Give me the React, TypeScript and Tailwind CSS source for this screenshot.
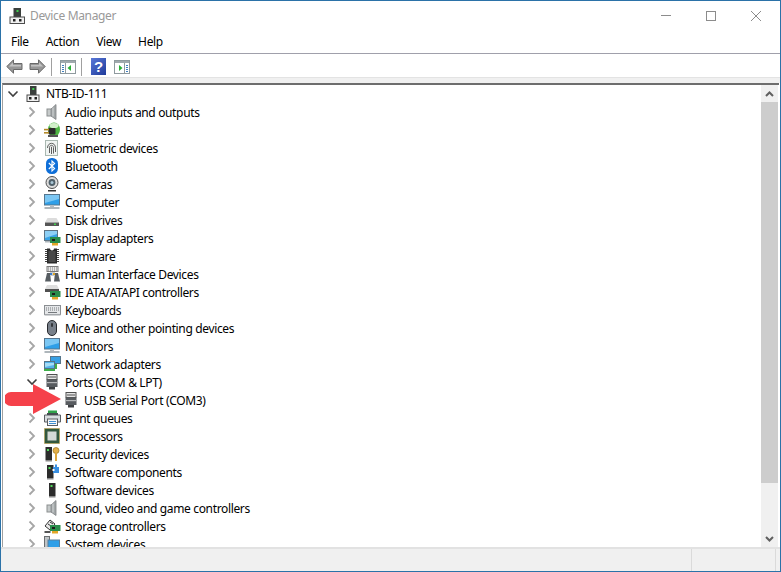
import type { ReactNode } from "react";

function Ico({ children, w = 16, h = 16 }: { children: ReactNode; w?: number; h?: number }) {
  return (
    <svg width={w} height={h} viewBox={`0 0 ${w} ${h}`} className="shrink-0">
      {children}
    </svg>
  );
}

const Computer = () => (
  <Ico>
    <rect x="4.5" y="0" width="7.5" height="10" fill="#3a3f3c" />
    <rect x="7.5" y="2" width="2" height="2" fill="#3fd04f" />
    <rect x="1" y="9" width="14.5" height="6.5" fill="#f1f1f1" stroke="#4c4c4c" />
    <rect x="4" y="11" width="2.5" height="2.5" fill="#222" />
    <rect x="10" y="11" width="2.5" height="2.5" fill="#222" />
  </Ico>
);

const RootComputer = () => (
  <Ico w={14}>
    <rect x="4" y="0" width="6.5" height="10" fill="#3a3f3c" />
    <rect x="6.3" y="2" width="2" height="2" fill="#3fd04f" />
    <rect x="1" y="9" width="12" height="6.5" fill="#f1f1f1" stroke="#4c4c4c" />
    <rect x="3" y="11" width="2.5" height="2.5" fill="#222" />
    <rect x="8.5" y="11" width="2.5" height="2.5" fill="#222" />
  </Ico>
);

const Speaker = () => (
  <Ico>
    <rect x="3" y="5" width="4.5" height="7" fill="#c6caca" stroke="#8b8f90" />
    <path d="M7 5 L12 0.5 V15.5 L7 12 Z" fill="#a2a7a8" stroke="#7e8284" strokeWidth="0.8" />
    <path d="M9 3.5 V12.5" stroke="#d4d7d8" />
  </Ico>
);

const Battery = () => (
  <Ico>
    <ellipse cx="10" cy="7.5" rx="6" ry="7" fill="#4fb544" />
    <ellipse cx="10" cy="3.5" rx="4.5" ry="2.6" fill="#d3f0cb" />
    <rect x="4.5" y="6" width="7" height="6.5" rx="1" fill="#2c2c2c" />
    <rect x="0" y="6.8" width="5" height="1.6" fill="#b48a2a" />
    <rect x="0" y="10" width="5" height="1.6" fill="#b48a2a" />
    <rect x="4" y="13" width="10" height="2" fill="#555" />
  </Ico>
);

const Fingerprint = () => (
  <Ico>
    <rect x="1.5" y="0.5" width="12" height="15" fill="#f0f4f2" stroke="#a9b8b1" />
    <g fill="none" stroke="#5f5f5f" strokeWidth="1">
      <path d="M3.5 8 C3.5 1.8 11.5 1.8 11.5 8 V12" />
      <path d="M5.5 13 V7.5 C5.5 4.6 9.5 4.6 9.5 7.5 V13.5" />
      <path d="M7.5 6.8 V14" />
    </g>
  </Ico>
);

const Bluetooth = () => (
  <Ico>
    <rect x="2" y="0" width="12" height="16" rx="5.5" fill="#0f6fd8" />
    <path d="M4.8 5 L10.6 10.6 L8 13 V3 L10.6 5.4 L4.8 11" fill="none" stroke="#fff" strokeWidth="1.1" />
  </Ico>
);

const Camera = () => (
  <Ico>
    <circle cx="8" cy="6.5" r="6" fill="#dcdcdc" stroke="#505050" />
    <circle cx="8" cy="6.5" r="3.4" fill="#4f606a" />
    <circle cx="8" cy="6.5" r="1.5" fill="#a9c6d6" />
    <rect x="4" y="14" width="8" height="1.5" fill="#333" />
  </Ico>
);

const Monitor = () => (
  <Ico>
    <rect x="0.5" y="0.5" width="15" height="10.5" fill="#2f9fe8" stroke="#55768f" />
    <path d="M1 1 H15 V5 L1 9 Z" fill="#7cc7f3" />
    <rect x="6" y="11" width="4" height="2" fill="#b6bcc0" />
    <rect x="0.5" y="13" width="15" height="2" fill="#aeb6bb" />
  </Ico>
);

const Disk = () => (
  <Ico>
    <path d="M3.5 6 H12.5 L15 10.5 H1 Z" fill="#dcdcdc" />
    <rect x="1" y="10.5" width="14" height="3.5" fill="#565656" />
    <rect x="10" y="11.5" width="2" height="1.5" fill="#44d04f" />
  </Ico>
);

const Display = () => (
  <Ico w={17}>
    <rect x="0.5" y="0.5" width="13" height="10" fill="#39a3e6" stroke="#5f7484" />
    <path d="M1 1 H13 V4 L1 8 Z" fill="#8ed0f5" />
    <rect x="1" y="11" width="8" height="1.5" fill="#aeb6bb" />
    <rect x="6" y="7" width="10.5" height="6" fill="#2a8d4b" />
    <rect x="8" y="9" width="3" height="2" fill="#1c1c1c" />
    <rect x="8" y="13" width="6" height="2.5" fill="#e2a628" />
  </Ico>
);

const Chip = () => (
  <Ico>
    <path d="M2 1 V15 M14 1 V15" stroke="#444" strokeWidth="2" strokeDasharray="1 1" />
    <path d="M3 0.5 H6 A2 2 0 0 0 10 0.5 H13 V15.5 H3 Z" fill="#2a2a2a" />
    <rect x="4.5" y="3" width="7" height="11" fill="#484848" />
  </Ico>
);

const Hid = () => (
  <Ico w={17}>
    <rect x="3" y="0.5" width="11" height="5" fill="#e8e8e8" stroke="#7b7b7b" />
    <path d="M4 2 H13 M4 4 H13" stroke="#7b7b7b" strokeDasharray="1 1" />
    <path d="M1 15.5 L3 7 H6 L7 15.5 Z" fill="#565c61" />
    <path d="M10 15.5 L11 7 H14 L16 15.5 Z" fill="#565c61" />
    <rect x="6" y="6" width="5" height="4" fill="#c7cbd0" />
    <rect x="6" y="7" width="2" height="2" fill="#3d7cc9" />
    <rect x="9" y="7" width="2" height="2" fill="#d9a52b" />
  </Ico>
);

const Ide = () => (
  <Ico w={17}>
    <path d="M3 1 H13 L15 5 H1 Z" fill="#dedede" />
    <rect x="1" y="5" width="14" height="3" fill="#505050" />
    <rect x="6" y="7" width="10.5" height="6" fill="#2a8d4b" />
    <rect x="8" y="9" width="3" height="2" fill="#1c1c1c" />
    <rect x="8" y="13" width="6" height="2.5" fill="#e2a628" />
  </Ico>
);

const Keyboard = () => (
  <Ico w={17}>
    <rect x="0.5" y="3.5" width="16" height="9" fill="#e4e6e8" stroke="#8a8e92" />
    <path d="M2 6 H15 M2 8 H15" stroke="#74787c" strokeDasharray="1 1" />
    <path d="M4 10.5 H13" stroke="#74787c" />
    <rect x="0.5" y="12" width="16" height="1.5" fill="#a3a7ab" />
  </Ico>
);

const Mouse = () => (
  <Ico>
    <rect x="3.5" y="0.5" width="9" height="15" rx="4.5" fill="#78808a" stroke="#26292d" />
    <rect x="7" y="3" width="2" height="4" rx="1" fill="#33363a" />
  </Ico>
);

const Network = () => (
  <Ico w={17}>
    <rect x="6.5" y="0.5" width="10" height="7" fill="#38a0e4" stroke="#567589" />
    <rect x="0.5" y="5.5" width="10" height="7" fill="#52b3ea" stroke="#567589" />
    <path d="M1 7 H10 V9 L1 11 Z" fill="#a4dcf7" />
    <rect x="0" y="13" width="11" height="2" fill="#3fae49" />
    <rect x="11" y="8" width="2" height="5" fill="#3fae49" />
  </Ico>
);

const Port = () => (
  <Ico>
    <rect x="3" y="0.5" width="10" height="5" fill="#e4e4e4" stroke="#505050" />
    <path d="M5 2 V4 M7 2 V4 M9 2 V4 M11 2 V4" stroke="#505050" />
    <rect x="2.5" y="5.5" width="11" height="7.5" fill="#585c60" />
    <rect x="3" y="8" width="10" height="1.2" fill="#b4b6b8" />
    <rect x="5" y="13" width="6" height="2.5" fill="#3e4144" />
  </Ico>
);

const Printer = () => (
  <Ico w={17}>
    <rect x="4" y="0.5" width="9" height="4" fill="#2fa24a" />
    <path d="M0.5 5 H16.5 V12 H0.5 Z" fill="#d9dde0" stroke="#5a5e62" />
    <rect x="3" y="3" width="11" height="2" fill="#474c51" />
    <rect x="3.5" y="9" width="10" height="6.5" fill="#f8f8f8" stroke="#5a5e62" />
    <path d="M5 11.5 H12 M5 13.5 H12" stroke="#3f8ed0" />
  </Ico>
);

const Processor = () => (
  <Ico>
    <rect x="0.5" y="0.5" width="15" height="15" fill="#2d5a3a" stroke="#c49a3c" strokeDasharray="1 1" />
    <rect x="1.5" y="1.5" width="13" height="13" fill="#34573f" />
    <rect x="3.5" y="3.5" width="9" height="9" fill="#d5d9d6" />
  </Ico>
);

const Tower = ({ x = 2 }: { x?: number }) => (
  <>
    <rect x={x} y="1" width="6.5" height="13" fill="#2c2c2c" />
    <rect x={x + 1.5} y="3" width="2" height="2" fill="#4fdc59" />
    <rect x={x} y="14" width="6.5" height="1.5" fill="#8a8a8a" />
  </>
);

const Security = () => (
  <Ico>
    <Tower x={1.5} />
    <circle cx="12" cy="4.5" r="3" fill="#e3b04a" stroke="#9a7420" strokeWidth="0.7" />
    <rect x="11" y="7" width="2" height="8" fill="#dca63c" />
  </Ico>
);

const SoftComp = () => (
  <Ico>
    <Tower x={3} />
    <rect x="9" y="3" width="6" height="6" fill="#3a8fe0" />
    <rect x="11" y="0.5" width="2" height="3" fill="#3a8fe0" />
    <rect x="8.5" y="5" width="2" height="2" fill="#fff" />
  </Ico>
);

const SoftDev = () => (
  <Ico>
    <Tower x={5} />
  </Ico>
);

const Storage = () => (
  <Ico w={17}>
    <path d="M1 8 L6 2 L11 6 L6 12 Z" fill="#e8e8e8" stroke="#333" />
    <path d="M4 6 L7 8 M6 4 L9 6" stroke="#333" />
    <rect x="6" y="7" width="10.5" height="6" fill="#2a8d4b" />
    <rect x="8" y="9" width="3" height="2" fill="#1c1c1c" />
    <rect x="8" y="13" width="6" height="2.5" fill="#e2a628" />
    <rect x="0.5" y="13" width="6" height="2" fill="#555" />
  </Ico>
);

const SystemDev = () => (
  <Ico>
    <rect x="0.5" y="0.5" width="5" height="14" fill="#bfc3c5" stroke="#6a6e70" />
    <rect x="4" y="4" width="11.5" height="9" fill="#2f9fe8" stroke="#5b7f9c" />
    <rect x="2" y="14" width="13" height="1.5" fill="#aeb6bb" />
  </Ico>
);

const Right = () => (
  <svg width="8" height="12" viewBox="0 0 8 12" className="shrink-0">
    <path d="M1.5 1.5 L6 6 L1.5 10.5" fill="none" stroke="#a6a6a6" strokeWidth="1.8" />
  </svg>
);

const Down = () => (
  <svg width="12" height="8" viewBox="0 0 12 8" className="shrink-0">
    <path d="M1.5 1.5 L6 6 L10.5 1.5" fill="none" stroke="#404040" strokeWidth="1.6" />
  </svg>
);

const Pane = ({ side }: { side: "left" | "right" }) => (
  <svg width="16" height="14" viewBox="0 0 16 14" className="shrink-0">
    <rect x="0.5" y="0.5" width="15" height="13" fill="#fff" stroke="#8f9a9e" />
    <rect x="1" y="1" width="14" height="2" fill="#a0a9ad" />
    <path d={side === "left" ? "M5.5 3 V13" : "M10.5 3 V13"} stroke="#8f9a9e" />
    {side === "left" ? (
      <>
        <path d="M2 5.5 H4 M2 7.5 H4 M2 9.5 H4 M2 11.5 H4" stroke="#3f7fc0" />
        <path d="M11 5 L7.5 8 L11 11 Z" fill="#28b035" />
      </>
    ) : (
      <>
        <path d="M12 5.5 H14 M12 7.5 H14 M12 9.5 H14 M12 11.5 H14" stroke="#3f7fc0" />
        <path d="M5 5 L8.5 8 L5 11 Z" fill="#28b035" />
      </>
    )}
  </svg>
);

const NavArrow = ({ flip }: { flip?: boolean }) => (
  <svg width="17" height="15" viewBox="0 0 17 15" className={flip ? "shrink-0 -scale-x-100" : "shrink-0"}>
    <path d="M0.8 7.5 L7.5 0.8 V4.5 H16 V10.5 H7.5 V14.2 Z" fill="#979797" stroke="#6a6a6a" />
    <path d="M3 7.5 L7 3.5 V6 H15 V7.5 Z" fill="#c4c4c4" />
  </svg>
);

const Help = () => (
  <div className="flex h-[17px] w-[15px] shrink-0 items-center justify-center bg-[linear-gradient(135deg,#5a78d8,#1e3a9a)] font-['Liberation_Sans',sans-serif] text-[15px] leading-none font-bold text-white">
    ?
  </div>
);

const rows = [
  ["Audio inputs and outputs", Speaker],
  ["Batteries", Battery],
  ["Biometric devices", Fingerprint],
  ["Bluetooth", Bluetooth],
  ["Cameras", Camera],
  ["Computer", Monitor],
  ["Disk drives", Disk],
  ["Display adapters", Display],
  ["Firmware", Chip],
  ["Human Interface Devices", Hid],
  ["IDE ATA/ATAPI controllers", Ide],
  ["Keyboards", Keyboard],
  ["Mice and other pointing devices", Mouse],
  ["Monitors", Monitor],
  ["Network adapters", Network],
] as const;

const rowsAfter = [
  ["Print queues", Printer],
  ["Processors", Processor],
  ["Security devices", Security],
  ["Software components", SoftComp],
  ["Software devices", SoftDev],
  ["Sound, video and game controllers", Speaker],
  ["Storage controllers", Storage],
  ["System devices", SystemDev],
] as const;

function Row({ label, Icon }: { label: string; Icon: () => ReactNode }) {
  return (
    <div className="flex h-[18px] items-center pl-[21px]">
      <div className="flex w-[20px] shrink-0 pl-[4px]">
        <Right />
      </div>
      <div className="flex w-[21px] shrink-0 items-center">
        <Icon />
      </div>
      <span className="whitespace-nowrap pt-[2px]">{label}</span>
    </div>
  );
}

export default function App() {
  return (
    <div className="flex h-[572px] w-[781px] flex-col overflow-hidden border border-[#2b72a8] bg-white font-['Noto_Sans',sans-serif] text-[12px] tracking-[-0.35px] text-black">
      {/* title bar */}
      <div className="flex h-[29px] shrink-0 items-center pl-2">
        <Computer />
        <span className="ml-[5px] text-[#999]">Device Manager</span>
        <div className="ml-auto flex items-center gap-[35px] pr-[19px]">
          <div className="h-px w-[10px] bg-[#8c8c8c]" />
          <div className="h-[10px] w-[10px] border border-[#8c8c8c]" />
          <svg width="10" height="10" viewBox="0 0 10 10">
            <path d="M0 0 L10 10 M10 0 L0 10" stroke="#8c8c8c" />
          </svg>
        </div>
      </div>
      {/* menu */}
      <div className="flex h-[24px] shrink-0 items-center gap-[17px] border-b border-[#a0a0ab] pl-[10px]">
        <span>File</span>
        <span>Action</span>
        <span>View</span>
        <span>Help</span>
      </div>
      {/* toolbar */}
      <div className="flex h-[23px] shrink-0 items-center pt-[2px] pl-[5px]">
        <NavArrow />
        <div className="w-[6px]" />
        <NavArrow flip />
        <div className="mx-[5px] h-[18px] w-px bg-[#a0a0a0]" />
        <div className="w-[3px]" />
        <Pane side="left" />
        <div className="mx-[5px] h-[18px] w-px bg-[#a0a0a0]" />
        <div className="w-[4px]" />
        <Help />
        <div className="w-[8px]" />
        <Pane side="right" />
      </div>
      <div className="h-[6px] shrink-0 border-t border-[#e3e3e3] bg-[#f0f0f0]" />
      {/* tree + scrollbar */}
      <div className="mr-[1px] ml-[1px] flex min-h-0 flex-1 border-t-2 border-l border-[#6d6d6d] border-l-[#a0a0a0]">
        <div className="relative min-w-0 flex-1 overflow-hidden">
          <div className="flex h-[18px] items-center pl-[4px]">
            <div className="flex w-[12px] shrink-0 justify-center">
              <Down />
            </div>
            <div className="ml-[7px] flex w-[20px] shrink-0 items-center">
              <RootComputer />
            </div>
            <span>NTB-ID-111</span>
          </div>
          {rows.map(([label, Icon]) => (
            <Row key={label} label={label} Icon={Icon} />
          ))}
          <div className="flex h-[18px] items-center pl-[23px]">
            <div className="flex w-[18px] shrink-0">
              <Down />
            </div>
            <div className="flex w-[21px] shrink-0 items-center">
              <Port />
            </div>
            <span className="pt-[2px]">Ports (COM &amp; LPT)</span>
          </div>
          <div className="flex h-[18px] items-center pl-[60px]">
            <div className="flex w-[21px] shrink-0 items-center">
              <Port />
            </div>
            <span className="pt-[2px]">USB Serial Port (COM3)</span>
          </div>
          {rowsAfter.map(([label, Icon]) => (
            <Row key={label} label={label} Icon={Icon} />
          ))}
          {/* red annotation arrow */}
          <svg width="58" height="34" viewBox="0 0 58 34" className="absolute top-[298px] left-[2px]">
            <path d="M28 1 L56 16 L28 31 V23 H6 A6.5 6.5 0 0 1 6 9 H28 Z" fill="#f5414a" />
          </svg>
        </div>
        <div className="flex w-[17px] shrink-0 flex-col bg-[#f0f0f0]">
          <div className="flex h-[17px] shrink-0 items-center justify-center">
            <svg width="9" height="6" viewBox="0 0 9 6">
              <path d="M1 5 L4.5 1.5 L8 5" fill="none" stroke="#606060" strokeWidth="2" />
            </svg>
          </div>
          <div className="h-[381px] shrink-0 bg-[#cdcdcd]" />
          <div className="mt-auto flex h-[17px] shrink-0 items-center justify-center">
            <svg width="9" height="6" viewBox="0 0 9 6">
              <path d="M1 1 L4.5 4.5 L8 1" fill="none" stroke="#606060" strokeWidth="2" />
            </svg>
          </div>
        </div>
        <div className="w-px shrink-0 bg-white" />
      </div>
      {/* status bar */}
      <div className="flex h-[24px] shrink-0 border-t-2 border-[#e2e2e2] bg-[#f0f0f0]">
        <div className="w-[691px] border-r border-[#dadada]" />
        <div className="w-[84px] border-r border-[#dadada]" />
      </div>
    </div>
  );
}
